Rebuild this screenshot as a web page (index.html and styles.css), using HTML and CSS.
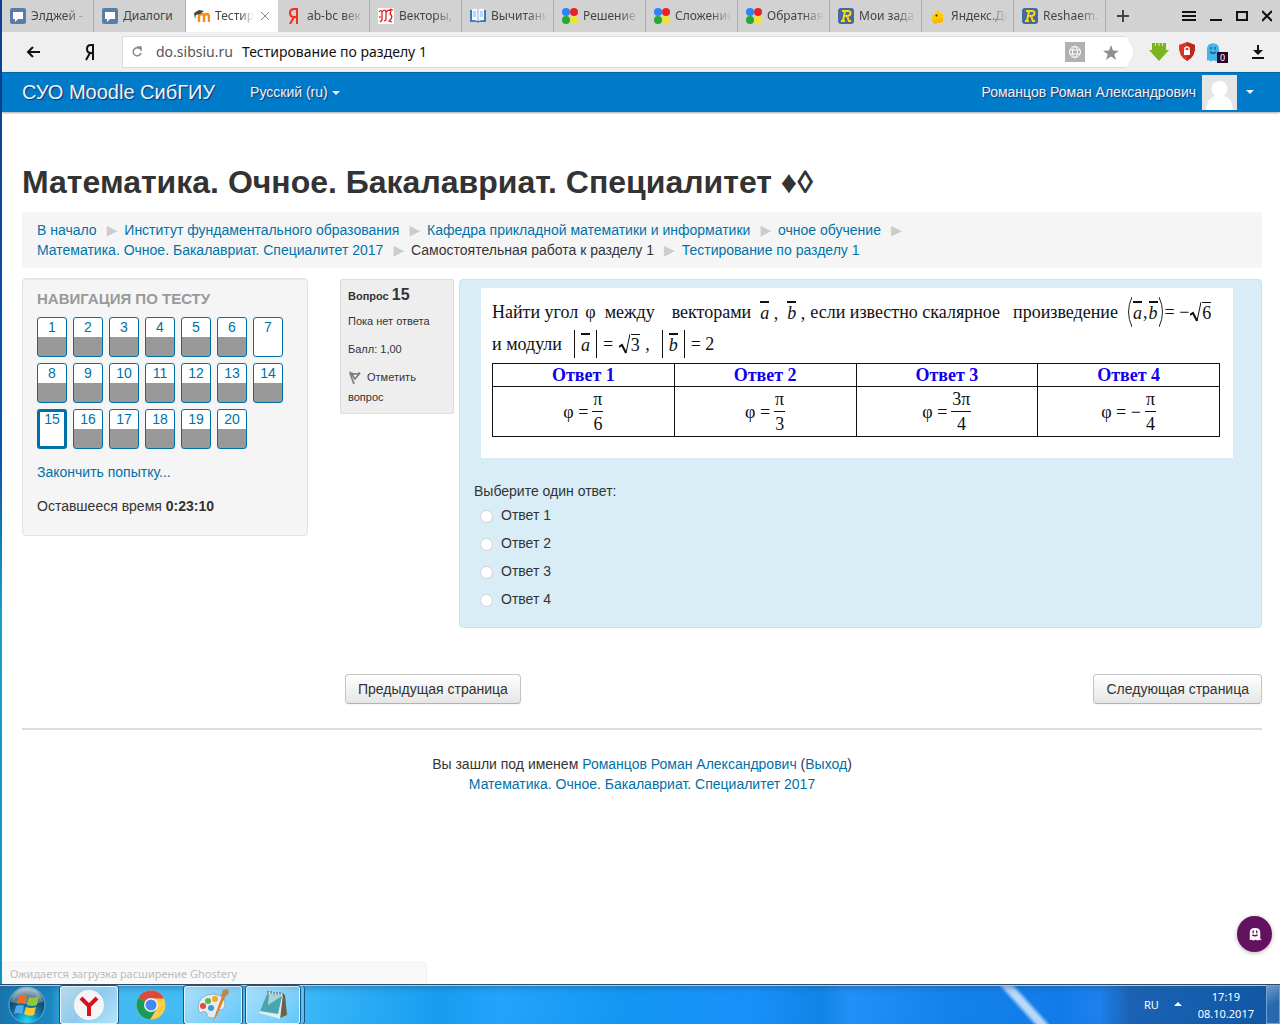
FILE: index.html
```html
<!DOCTYPE html>
<html lang="ru">
<head>
  <meta charset="UTF-8">
  <meta name="viewport" content="width=device-width, initial-scale=1.0">
  <title>Тестирование по разделу 1</title>
  <link rel="stylesheet" href="styles.css">
</head>
<body>
  <svg class="defs" width="0" height="0" aria-hidden="true">
    <symbol id="chat" viewBox="0 0 16 16"><rect width="16" height="16" rx="2" fill="#587ea8"/><path d="M3 4h10v7H8l-3 3v-3H3z" fill="#fff"/></symbol>
    <symbol id="dots" viewBox="0 0 16 16"><circle cx="4" cy="4" r="4" fill="#2b83f6"/><circle cx="12" cy="4" r="4" fill="#ea2230"/><circle cx="4" cy="12" r="4" fill="#22a834"/><circle cx="12" cy="12" r="4" fill="#efe62c"/></symbol>
    <symbol id="reshaem" viewBox="0 0 16 16"><rect width="16" height="16" rx="3" fill="#44699c"/><path d="M4 3h6q3 0 2.500 2.500T8.500 8M7 3 5 13M3 13h4M7 8h2l2 5h2" fill="none" stroke="#ffd60a" stroke-width="2"/></symbol>
    <symbol id="ghost" viewBox="0 0 16 16"><path d="M2 15V6q0-5 6-5t6 5v7l2 2-3-.5-2 1-2-1-3 1-2-1-4 .5z" fill="currentColor"/></symbol>
  </svg>
  <div class="desktop">
    <div class="window">
      <nav class="tabs">
        <a class="tab" href="#"><svg class="favicon"><use href="#chat"/></svg><span>Элджей -</span></a>
        <a class="tab" href="#"><svg class="favicon"><use href="#chat"/></svg><span>Диалоги</span></a>
        <a class="tab active" href="#"><svg class="favicon" viewBox="0 0 16 16"><path d="M5 14V9q0-3 2.500-3T10 9v5M10 9q0-3 2.500-3T15 9v5" fill="none" stroke="#f68b20" stroke-width="2.500"/><path d="M0 5 5 2l5 1-4 3-4 1-1 4z" fill="#444"/></svg><span>Тестир</span><svg class="close" viewBox="0 0 8 8"><path d="M0 0l8 8M8 0 0 8" stroke="#888"/></svg></a>
        <a class="tab" href="#"><svg class="favicon" viewBox="0 0 16 16"><path d="M11 16V1H8Q4 1 4 5t4 4h3M8 9l-4 7" fill="none" stroke="#f3301c" stroke-width="2"/></svg><span>ab-bc век</span></a>
        <a class="tab" href="#"><svg class="favicon" viewBox="0 0 16 16"><rect width="16" height="16" fill="#fff"/><path d="M1 4q2-3 3 0v8l-2 2M4 4q3-4 4 0v8l-2 1M8 4q3-3 5-1l-1 3q3 2 1 5l-2 2 3 1M1 9h2M12 1l3 1" fill="none" stroke="#e00b16" stroke-width="1.200"/></svg><span>Векторы,</span></a>
        <a class="tab" href="#"><svg class="favicon" viewBox="0 0 16 16"><path d="M0 2h16v12H9l-1 1-1-1H0z" fill="#377cc0"/><path d="M2 1q4-1 6 1v11q-3-1-6-1zM14 1q-4-1-6 1v11q3-1 6-1z" fill="#f3f8fd"/><path d="M8 2v11M3 4h3M3 6h3M3 8h3M10 4h3M10 6h3M10 8h3" stroke="#8bb4dc"/></svg><span>Вычитани</span></a>
        <a class="tab" href="#"><svg class="favicon"><use href="#dots"/></svg><span>Решение</span></a>
        <a class="tab" href="#"><svg class="favicon"><use href="#dots"/></svg><span>Сложение</span></a>
        <a class="tab" href="#"><svg class="favicon"><use href="#dots"/></svg><span>Обратная</span></a>
        <a class="tab" href="#"><svg class="favicon"><use href="#reshaem"/></svg><span>Мои зада</span></a>
        <a class="tab" href="#"><svg class="favicon" viewBox="0 0 16 16"><path d="M2 7l3-1 4-5v4l4 1v8l-9 2-2-3z" fill="#fc0"/><path d="M2 12l11-2v4l-9 2z" fill="#ffb800"/><circle cx="6.500" cy="7.500" r="1" fill="#222"/></svg><span>Яндекс.Де</span></a>
        <a class="tab" href="#"><svg class="favicon"><use href="#reshaem"/></svg><span>Reshaem.</span></a>
        <button class="new-tab" aria-label="Новая вкладка"><svg width="12" height="12"><path d="M6 0v12M0 6h12" stroke="#444" stroke-width="2"/></svg></button>
        <div class="window-buttons">
          <button aria-label="Меню"><svg width="14" height="12"><path d="M0 2h14M0 6h14M0 10h14" stroke="#111" stroke-width="2"/></svg></button>
          <button aria-label="Свернуть"><svg width="12" height="12"><path d="M0 10h12" stroke="#111" stroke-width="2"/></svg></button>
          <button aria-label="Развернуть"><svg width="12" height="12"><rect x="1" y="2" width="10" height="8" fill="none" stroke="#111" stroke-width="2"/></svg></button>
          <button aria-label="Закрыть"><svg width="10" height="12"><path d="M0 1l10 10M10 1 0 11" stroke="#111" stroke-width="2"/></svg></button>
        </div>
      </nav>

      <div class="toolbar">
        <button class="back" aria-label="Назад"><svg width="16" height="14"><path d="M14 7H2M7 2 2 7l5 5" fill="none" stroke="#111" stroke-width="2"/></svg></button>
        <button class="ya" aria-label="Яндекс"><svg width="10" height="18"><path d="M8 17V2H6Q2 2 2 6t4 4h2M5 10 1 17" fill="none" stroke="#111" stroke-width="2"/></svg></button>
        <div class="address">
          <svg width="12" height="12"><path d="M9 3a4 4 0 1 0 1 4M6 1h4v4" fill="none" stroke="#888" stroke-width="1.500"/></svg>
          <label for="url">do.sibsiu.ru</label>
          <input id="url" type="text" value="Тестирование по разделу 1">
          <svg class="translate" width="20" height="20"><rect width="20" height="20" fill="#b1b1b1"/><g fill="none" stroke="#fff"><circle cx="10" cy="10" r="5.500"/><ellipse cx="10" cy="10" rx="2.500" ry="5.500"/><path d="M5 8h10M5 12h10"/></g></svg>
          <svg width="16" height="15" viewBox="0 0 16 15"><path d="M8 0l2 5.500 6 .3-4.700 3.500L13 15l-5-3.400L3 15l1.700-5.700L0 5.800l6-.3z" fill="#8f8f8f"/></svg>
        </div>
        <div class="extensions">
          <svg width="20" height="20"><path d="M3 1h14v7h3L10 19 0 8h3z" fill="#78b51f"/><path d="M6.500 1v3M10 1v3M13.500 1v3" stroke="#d4edae"/></svg>
          <svg width="18" height="20"><path d="M9 0l8 3q1 11-8 16Q0 14 1 3z" fill="#db3327"/><path d="M9 0l8 3q1 11-8 16z" fill="#bd271e"/><rect x="6" y="8" width="6" height="5" fill="#fff"/><path d="M7 8V6q2-2 4 0v2" fill="none" stroke="#fff" stroke-width="1.500"/></svg>
          <span class="ghostery"><svg width="16" height="20" viewBox="0 0 16 16" preserveAspectRatio="none"><use href="#ghost"/><path d="M6 4v2M10 4v2M5 8q3 2 6 0" stroke="#1a6aa0" fill="none" stroke-width="1.500"/></svg><b>0</b></span>
        </div>
        <button class="download" aria-label="Загрузки"><svg width="12" height="14"><path d="M6 0v8M0 13h12" stroke="#111" stroke-width="2"/><path d="M1 5h10L6 10z" fill="#111"/></svg></button>
      </div>

      <header class="navbar">
        <a class="brand" href="#">СУО Moodle СибГИУ</a>
        <button class="lang">Русский (ru) <i class="caret"></i></button>
        <button class="user">Романцов Роман Александрович
          <svg class="avatar" viewBox="0 0 35 35"><rect width="35" height="35" fill="#e5e5e5"/><circle cx="17.500" cy="14" r="8" fill="#fff"/><path d="M4 35q1-12 9-14h9q8 2 9 14z" fill="#fff"/></svg>
          <i class="caret"></i></button>
      </header>

      <main class="page">
        <h1>Математика. Очное. Бакалавриат. Специалитет ♦◊</h1>
        <ul class="breadcrumb">
          <li><a href="#">В начало</a><span class="divider">▶</span></li>
          <li><a href="#">Институт фундаментального образования</a><span class="divider">▶</span></li>
          <li><a href="#">Кафедра прикладной математики и информатики</a><span class="divider">▶</span></li>
          <li><a href="#">очное обучение</a><span class="divider">▶</span></li>
          <li><a href="#">Математика. Очное. Бакалавриат. Специалитет 2017</a><span class="divider">▶</span></li>
          <li>Самостоятельная работа к разделу 1<span class="divider">▶</span></li>
          <li><a href="#">Тестирование по разделу 1</a></li>
        </ul>

        <div class="columns">
          <aside class="block">
            <h2>Навигация по тесту</h2>
            <div class="qn-buttons">
              <a class="saved" href="#">1</a>
              <a class="saved" href="#">2</a>
              <a class="saved" href="#">3</a>
              <a class="saved" href="#">4</a>
              <a class="saved" href="#">5</a>
              <a class="saved" href="#">6</a>
              <a href="#">7</a>
              <a class="saved" href="#">8</a>
              <a class="saved" href="#">9</a>
              <a class="saved" href="#">10</a>
              <a class="saved" href="#">11</a>
              <a class="saved" href="#">12</a>
              <a class="saved" href="#">13</a>
              <a class="saved" href="#">14</a>
              <a class="current" href="#">15</a>
              <a class="saved" href="#">16</a>
              <a class="saved" href="#">17</a>
              <a class="saved" href="#">18</a>
              <a class="saved" href="#">19</a>
              <a class="saved" href="#">20</a>
            </div>
            <p><a href="#">Закончить попытку...</a></p>
            <p>Оставшееся время <strong>0:23:10</strong></p>
          </aside>

          <form class="quiz">
            <div class="question">
              <div class="info">
                <h3>Вопрос <span>15</span></h3>
                <p>Пока нет ответа</p>
                <p>Балл: 1,00</p>
                <p class="flag"><svg width="15" height="14"><path d="M2 2l4 11" stroke="#888" stroke-width="2"/><path d="M3 2q4 2 9 0L7 8z" fill="none" stroke="#777" stroke-width="1.500"/></svg>Отметить вопрос</p>
              </div>
              <div class="content">
                <div class="task">
                  <p class="given">
                    <span>Найти угол</span><span class="phi">φ</span><span>между</span><span class="wide">векторами</span><span><i class="vec">a</i> ,</span><span><i class="vec">b</i> ,</span><span class="known">если известно скалярное</span><span class="made">произведение</span>
                    <span class="product"><svg width="5" height="30"><path d="M5 0Q-2 15 5 30" fill="none" stroke="#222"/></svg><i class="vec">a</i>,<i class="vec">b</i><svg width="5" height="30"><path d="M0 0q7 15 0 30" fill="none" stroke="#222"/></svg>= −<svg width="11" height="22"><path d="M0 14l3-2 4 8" fill="none" stroke="#111" stroke-width="2"/><path d="M7 20 11 1" stroke="#111"/></svg><span class="root">6</span></span>
                  </p>
                  <p class="given">
                    <span>и модули</span><span class="abs"><i class="vec">a</i></span><span class="product">=&nbsp;<svg width="11" height="22"><path d="M0 14l3-2 4 8" fill="none" stroke="#111" stroke-width="2"/><path d="M7 20 11 1" stroke="#111"/></svg><span class="root">3</span>&nbsp;,</span><span class="abs"><i class="vec">b</i></span><span>= 2</span>
                  </p>
                  <table>
                    <tr><th>Ответ 1</th><th>Ответ 2</th><th>Ответ 3</th><th>Ответ 4</th></tr>
                    <tr>
                      <td><span class="formula">φ = <span class="frac"><span>π</span><span>6</span></span></span></td>
                      <td><span class="formula">φ = <span class="frac"><span>π</span><span>3</span></span></span></td>
                      <td><span class="formula">φ = <span class="frac"><span>3π</span><span>4</span></span></span></td>
                      <td><span class="formula">φ = − <span class="frac"><span>π</span><span>4</span></span></span></td>
                    </tr>
                  </table>
                </div>
                <p class="prompt">Выберите один ответ:</p>
                <div class="answers">
                  <label><input type="radio" name="answer">Ответ 1</label>
                  <label><input type="radio" name="answer">Ответ 2</label>
                  <label><input type="radio" name="answer">Ответ 3</label>
                  <label><input type="radio" name="answer">Ответ 4</label>
                </div>
              </div>
            </div>
            <div class="submit">
              <button type="button">Предыдущая страница</button>
              <button type="button">Следующая страница</button>
            </div>
          </form>
        </div>

        <footer>
          Вы зашли под именем <a href="#">Романцов Роман Александрович</a> (<a href="#">Выход</a>)<br>
          <a href="#">Математика. Очное. Бакалавриат. Специалитет 2017</a>
        </footer>
      </main>
      <div class="status">Ожидается загрузка расширение Ghostery</div>
      <button class="tracker" aria-label="Ghostery"><svg width="14" height="16" viewBox="0 0 16 16"><use href="#ghost"/><path d="M6 4v3M10 4v3M5 9q3 2 6 0" stroke="#63125f" fill="none" stroke-width="1.500"/></svg></button>
    </div>

    <div class="taskbar">
      <button class="start" aria-label="Пуск">
        <svg width="38" height="38" viewBox="0 0 38 38">
          <defs><radialGradient id="orb" cx=".5" cy=".95" r=".9"><stop offset="0" stop-color="#18e0ff"/><stop offset=".4" stop-color="#127aae"/><stop offset=".75" stop-color="#164668"/><stop offset="1" stop-color="#8ba9bd"/></radialGradient></defs>
          <circle cx="19" cy="19" r="18" fill="url(#orb)" stroke="#5fb0d6"/>
          <path d="M3 16Q6 3 19 2q13 1 16 14-16 4-32 0z" fill="#fff" opacity=".3"/>
          <path d="M11 10q4-3 8 0l-2 8q-4-2-8 0z" fill="#ee6a2b"/>
          <path d="M21 11q5 2 10-1l-2 9q-5 2-10 0z" fill="#93c63f"/>
          <path d="M8 20q5-2 8 0l-2 8q-4-2-8 0z" fill="#52aae8"/>
          <path d="M18 21q5 2 10 0l-2 8q-5 2-10-1z" fill="#fbc92e"/>
        </svg>
      </button>
      <button class="app open front" aria-label="Яндекс.Браузер"><svg width="32" height="32"><circle cx="16" cy="16" r="15" fill="#f5f5f5"/><path d="M8 9l8 8 8-8M16 16v11" fill="none" stroke="#d8101d" stroke-width="4"/></svg></button>
      <button class="app" aria-label="Chrome">
        <svg width="30" height="30" viewBox="0 0 30 30"><circle cx="15" cy="15" r="14.500" fill="#fccd45"/><path d="M15 15 2.500 7.700A14.500 14.500 0 0 0 14 29.500l7-11z" fill="#179b58"/><path d="M15 15 2.500 7.700a14.500 14.500 0 0 1 25.500.8H15z" fill="#dc4a3d"/><circle cx="15" cy="15" r="7" fill="#f3f3f3"/><circle cx="15" cy="15" r="5.500" fill="#4486f4"/></svg>
      </button>
      <button class="app open" aria-label="Paint">
        <svg width="34" height="34" viewBox="0 0 34 34"><path d="M2 20Q2 7 17 6q13 1 12 10 0 6-6 6-4 1-2 5-2 4-6 3-5-1-4-5-4-3-6 0-2 0-3-5z" fill="#e2edf6" stroke="#8fabc4"/><circle cx="7" cy="18" r="3" fill="#e34b38"/><circle cx="12" cy="13" r="3" fill="#5ab846"/><circle cx="19" cy="11" r="3" fill="#f7a820"/><circle cx="15" cy="20" r="3" fill="#3a9bd8"/><path d="M26 8 17 33l4-6 8-18z" fill="#e77c26"/><path d="M25 8l2-6 5-1 1 4-4 4z" fill="#b98850"/></svg>
      </button>
      <button class="app open stack" aria-label="Блокнот">
        <svg width="32" height="32" viewBox="0 0 32 32"><path d="M25 5l3 1 2 20-7 3z" fill="#6d6248"/><path d="M11 3l15 2-3 25-21-6z" fill="#d9eff0"/><path d="M10 5l15 2-4 18L3 22z" fill="#4ba4b0"/><path d="M12 5l13 2-14 9z" fill="#a5d5da"/><path d="M11 2v3M14 2v3M17 3v3M20 3v3M23 3v3M26 4v3" stroke="#555"/></svg>
      </button>
      <div class="tray">
        <span class="input-lang">RU</span>
        <svg width="8" height="5"><path d="M4 0l4 4H0z" fill="#fff"/></svg>
        <time>17:19<br>08.10.2017</time>
        <button class="show-desktop" aria-label="Свернуть все окна"></button>
      </div>
    </div>
  </div>
</body>
</html>
```

FILE: styles.css
```css
body {
  margin: 0;
  font: 14px/20px "Liberation Sans", Arial, sans-serif;
  color: #333;
}
a {
  color: #0070a8;
  text-decoration: none;
}
button {
  font: inherit;
  color: inherit;
  padding: 0;
  border: 0;
  background: none;
  cursor: pointer;
}
p, h1, h2, h3, ul {
  margin: 0;
  padding: 0;
}
svg {
  flex: none;
}
.defs {
  position: absolute;
}
.desktop {
  min-height: 100vh;
  display: flex;
  flex-direction: column;
  background: linear-gradient(#0b3f92, #0a56a8 45%, #1a9fc8 60%, #1090c4);
}
.window {
  position: relative;
  flex: 1;
  margin-left: 2px;
  background: #fff;
}

/* browser tabs */
.tabs {
  display: flex;
  height: 32px;
  background: #d2d2d2;
  font: 12px/18px "Noto Sans", sans-serif;
}
.tab {
  flex: 0 1 92px;
  min-width: 0;
  box-sizing: border-box;
  display: flex;
  align-items: center;
  gap: 5px;
  padding: 0 2px 0 8px;
  border-right: 1px solid #adadad;
  color: #444;
}
.tab span {
  flex: 1;
  overflow: hidden;
  white-space: nowrap;
  -webkit-mask-image: linear-gradient(to right, #000 60%, transparent 95%);
  mask-image: linear-gradient(to right, #000 60%, transparent 95%);
}
.tab:nth-child(2) span {
  -webkit-mask-image: none;
  mask-image: none;
}
.tab.active {
  padding-right: 8px;
  background: #fff;
  border-color: #fff;
}
.favicon {
  width: 16px;
  height: 16px;
}
.close {
  width: 8px;
  height: 8px;
}
.new-tab {
  display: flex;
  align-items: center;
  padding: 0 11px;
}
.window-buttons {
  display: flex;
  align-items: center;
  gap: 14px;
  margin-left: auto;
  padding-right: 8px;
}
.window-buttons button, .toolbar button {
  display: flex;
}

/* address bar */
.toolbar {
  display: flex;
  align-items: center;
  box-sizing: border-box;
  height: 40px;
  padding: 0 16px 0 24px;
  background: #efefef;
  font: 14px/20px "Noto Sans", sans-serif;
}
.back {
  margin-right: 43px;
}
.ya {
  margin-right: 27px;
}
.address {
  flex: 1;
  display: flex;
  align-items: center;
  box-sizing: border-box;
  height: 32px;
  padding: 0 14px 0 8px;
  background: #fff;
  border: 1px solid #ddd;
  clip-path: polygon(0 0, calc(100% - 8px) 0, 100% 50%, calc(100% - 8px) 100%, 0 100%);
}
.address label {
  margin: 0 9px 0 13px;
  color: #555;
}
.address input {
  flex: 1;
  padding: 0;
  border: 0;
  outline: 0;
  font: inherit;
  color: #111;
}
.translate {
  margin-right: 18px;
}
.extensions {
  display: flex;
  align-items: center;
  gap: 9px;
  margin: 0 24px 0 15px;
}
.ghostery {
  position: relative;
  display: flex;
  width: 23px;
  color: #45b4e6;
}
.ghostery b {
  position: absolute;
  right: 0;
  bottom: -1px;
  width: 11px;
  background: #31042e;
  color: #fff;
  font: 9px/11px "Noto Sans", sans-serif;
  text-align: center;
}

/* site header */
.navbar {
  display: flex;
  align-items: center;
  height: 40px;
  padding: 0 26px 0 20px;
  background: #007bc9;
  box-shadow: inset 0 1px #0067a9, 0 1px 2px rgba(0, 0, 0, 0.35);
  color: #f2f2f2;
  text-shadow: 1px 1px 1px #1b2f75;
}
.brand {
  margin-right: 35px;
  color: #f2f2f2;
  font-size: 20px;
}
.lang, .user {
  text-shadow: inherit;
}
.user {
  display: flex;
  align-items: center;
  margin-left: auto;
}
.avatar {
  width: 35px;
  height: 35px;
  margin: 0 9px 0 6px;
}
.caret {
  display: inline-block;
  vertical-align: middle;
  border: 4px solid transparent;
  border-top-color: #f2f2f2;
  border-bottom: 0;
}

/* page */
.page {
  padding: 50px 18px 0 20px;
}
h1 {
  font-size: 32px;
  line-height: 40px;
}
.breadcrumb {
  margin: 10px 0;
  padding: 8px 15px;
  background: #f5f5f5;
  border-radius: 4px;
  list-style: none;
}
.breadcrumb li {
  display: inline-block;
  text-shadow: 0 1px 0 #fff;
}
.divider {
  padding: 0 3px 0 10px;
  color: #ccc;
  font-family: "DejaVu Sans", sans-serif;
  line-height: 1;
}
.columns {
  display: flex;
  align-items: flex-start;
  gap: 32px;
}
.block {
  flex: 0 0 286px;
  box-sizing: border-box;
  padding: 10px 14px 19px;
  background: #f5f5f5;
  border: 1px solid #e3e3e3;
  border-radius: 4px;
  box-shadow: inset 0 1px 1px rgba(0, 0, 0, 0.05);
}
.block h2 {
  margin-bottom: 8px;
  color: #999;
  font-size: 15px;
  line-height: 20px;
  text-transform: uppercase;
}
.block p {
  margin-bottom: 14px;
}
.block p:last-child {
  margin-bottom: 0;
}
.qn-buttons {
  display: flex;
  flex-wrap: wrap;
  gap: 6px;
  margin-bottom: 13px;
}
.qn-buttons a {
  box-sizing: border-box;
  width: 30px;
  height: 40px;
  background: #fff;
  border: 1px solid #0070a8;
  border-radius: 3px;
  line-height: 18px;
  text-align: center;
}
.qn-buttons .saved {
  background: linear-gradient(#fff 50%, #999 50%);
}
.qn-buttons .current {
  border-width: 3px;
  line-height: 14px;
}
.quiz {
  flex: 1;
  min-width: 0;
  padding-top: 1px;
}
.question {
  display: flex;
  align-items: flex-start;
  gap: 5px;
}
.info {
  flex: 0 0 114px;
  box-sizing: border-box;
  padding: 5px 7px 6px;
  background: #eee;
  border: 1px solid #dcdcdc;
  border-radius: 2px;
  font-size: 11px;
}
.info h3 {
  margin-bottom: 5px;
  font-size: 11px;
}
.info h3 span {
  font-size: 16px;
}
.info p {
  margin-bottom: 8px;
}
.info .flag {
  margin: 0;
}
.flag svg {
  margin-right: 4px;
  vertical-align: middle;
}
.content {
  flex: 1;
  min-width: 0;
  box-sizing: border-box;
  padding: 8px 14px 18px;
  background: #d9edf7;
  border: 1px solid #bce8f1;
  border-radius: 4px;
}

/* task statement */
.task {
  box-sizing: border-box;
  max-width: 752px;
  height: 170px;
  margin: 0 7px 23px;
  padding: 7px 13px 0 11px;
  background: #fff;
  color: #111;
  font: 18px/20px "Liberation Serif", serif;
}
.given {
  display: flex;
  align-items: center;
  gap: 9px;
  height: 34px;
  white-space: nowrap;
}
.given + .given {
  height: 30px;
}
.given .phi {
  margin-left: -2px;
}
.given .wide {
  margin-left: 8px;
}
.given .known {
  margin-left: -4px;
}
.given .made {
  margin-left: 4px;
}
.product {
  display: flex;
  align-items: center;
  gap: 1px;
}
.vec {
  display: inline-block;
  border-top: 2px solid #111;
}
.root {
  border-top: 1px solid #111;
}
.abs {
  margin: 0 -3px 0 3px;
  padding: 3px 6px;
  border: solid #111;
  border-width: 0 1px;
}
.task table {
  width: 100%;
  margin-top: 4px;
  border-collapse: collapse;
  table-layout: fixed;
  text-align: center;
}
.task th, .task td {
  padding: 1px;
  border: 1px solid #111;
}
.task th {
  color: #1100f0;
}
.task td {
  padding: 0 1px;
  height: 48px;
}
.formula, .frac {
  display: inline-flex;
  align-items: center;
  gap: 4px;
  vertical-align: middle;
}
.frac {
  flex-direction: column;
  gap: 0;
}
.frac span {
  padding: 2px 1px;
}
.frac span:first-child {
  border-bottom: 1px solid #111;
}
.answers {
  display: flex;
  flex-direction: column;
  gap: 8px;
  margin-top: 4px;
}
.answers label {
  display: flex;
  align-items: center;
}
.answers input {
  appearance: none;
  width: 13px;
  height: 13px;
  margin: 3px 8px 0 6px;
  background: #fff;
  border: 1px solid #d2d2d2;
  border-radius: 50%;
}
.submit {
  display: flex;
  justify-content: space-between;
  margin: 46px 0 24px;
  padding-left: 5px;
}
.submit button {
  padding: 4px 12px;
  background: linear-gradient(#fff, #e6e6e6);
  border: 1px solid #c5c5c5;
  border-bottom-color: #b3b3b3;
  border-radius: 4px;
  box-shadow: 0 1px 2px rgba(0, 0, 0, 0.05);
}
footer {
  padding: 24px 0 40px;
  border-top: 2px solid #ddd;
  text-align: center;
}

/* overlays at the bottom of the window */
.status {
  position: absolute;
  left: 0;
  bottom: 0;
  box-sizing: border-box;
  width: 425px;
  padding: 1px 8px 0;
  background: #f9f9f9;
  border: solid #f0f0f0;
  border-width: 1px 1px 0 0;
  border-radius: 0 4px 0 0;
  color: #bbb;
  font: 11px/20px "Noto Sans", sans-serif;
}
.tracker {
  position: absolute;
  right: 8px;
  bottom: 32px;
  display: flex;
  align-items: center;
  justify-content: center;
  width: 35px;
  height: 36px;
  background: #63125f;
  border-radius: 50%;
  box-shadow: 0 1px 4px rgba(0, 0, 0, 0.3);
  color: #fff;
}

/* taskbar */
.taskbar {
  display: flex;
  align-items: center;
  gap: 4px;
  box-sizing: border-box;
  height: 40px;
  padding-left: 8px;
  border-top: 1px solid #2d4a68;
  box-shadow: inset 0 1px #a9cdea, inset 0 4px 5px rgba(40, 90, 130, 0.4);
  background:
    linear-gradient(48deg, transparent 42%, rgba(255, 255, 255, 0.7) 47%, rgba(255, 255, 255, 0.7) 52%, transparent 57%) 980px 0 / 90px 40px no-repeat,
    linear-gradient(to right, #1778b0, #1a86c0 50px, #45b8ee 70px, #40bcfa 280px, #169df0 440px, #23a4fb 500px, #1296f3 630px, #1891fb 750px, #1184e8 820px, #2190f8 850px, #1282ea 960px, #127beb 1060px, #1d80ed 1100px, #1b62b4 1130px, #0f57a5);
}
.start {
  display: flex;
  margin-right: 10px;
}
.app {
  display: flex;
  align-items: center;
  justify-content: center;
  box-sizing: border-box;
  width: 58px;
  height: 38px;
}
.open {
  background: linear-gradient(135deg, rgba(255, 255, 255, 0.55), rgba(255, 255, 255, 0.2));
  border: 1px solid rgba(255, 255, 255, 0.75);
  border-radius: 3px;
  box-shadow: 0 0 0 1px #18567f;
}
.front {
  background: linear-gradient(135deg, #b7daec, #8fcbec 50%, #b3e3fb);
}
.stack {
  width: 54px;
  box-shadow: 0 0 0 1px #18567f, 4px 0 0 #63baf0, 5px 0 0 #18567f;
}
.tray {
  display: flex;
  align-items: center;
  align-self: stretch;
  margin-left: auto;
  color: #fff;
  font: 11px/17px "Noto Sans", sans-serif;
}
.input-lang {
  margin-right: 15px;
}
.tray time {
  margin: 0 12px 0 16px;
  text-align: center;
}
.show-desktop {
  align-self: stretch;
  width: 14px;
  background: linear-gradient(150deg, rgba(255, 255, 255, 0.4), rgba(255, 255, 255, 0.1) 50%);
  border: 1px solid #6fa3d8;
}
```
